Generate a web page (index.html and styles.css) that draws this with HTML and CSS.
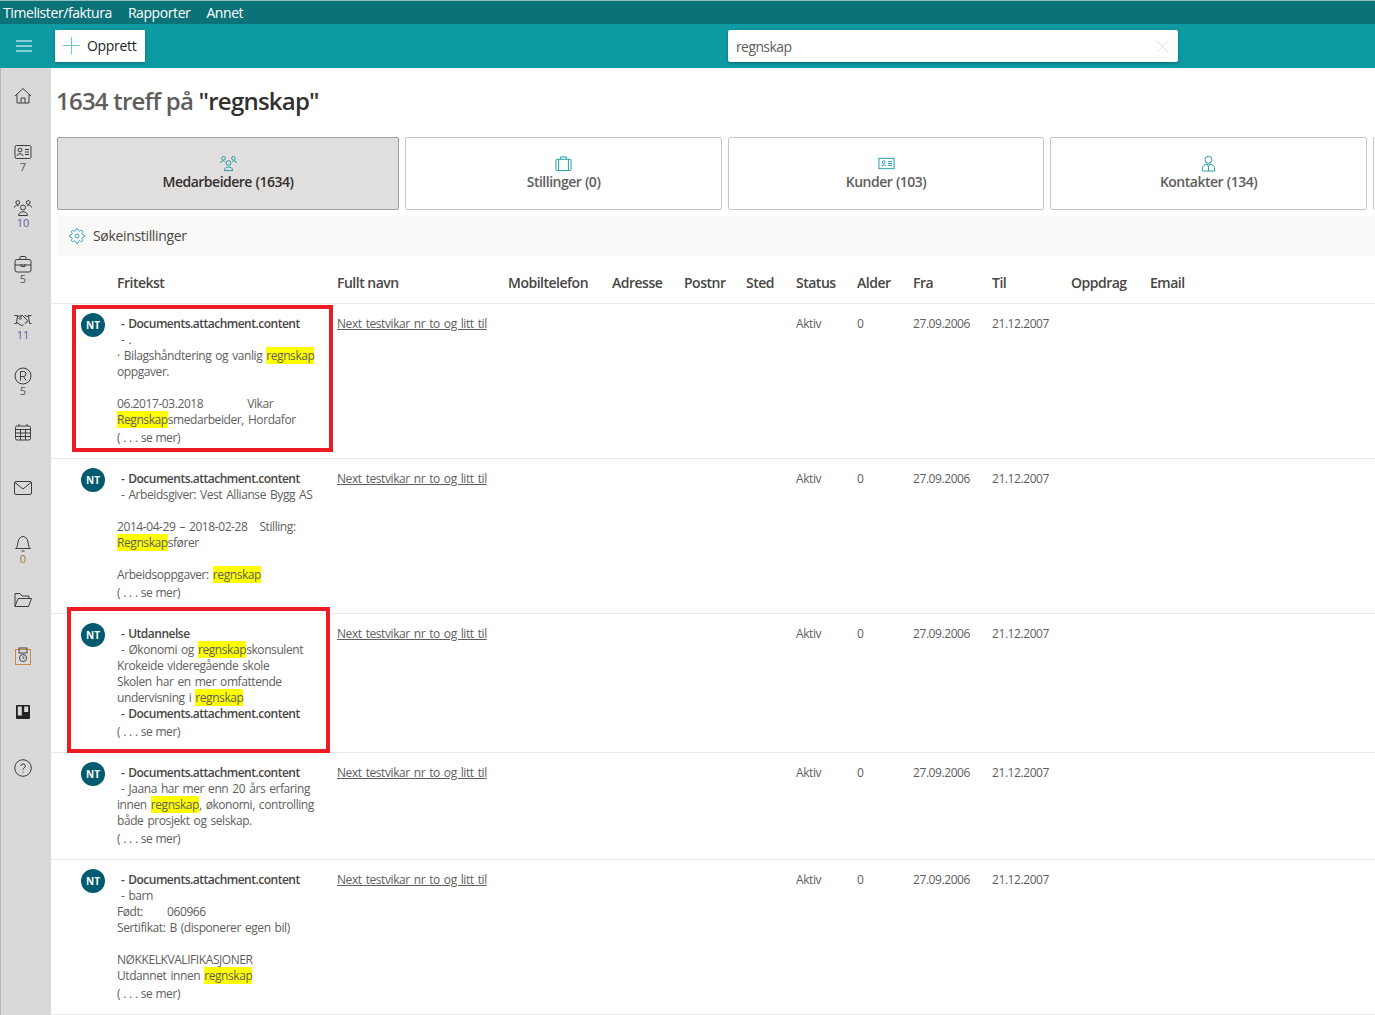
FILE: index.html

```html
<!DOCTYPE html>
<html lang="nb">
<head>
    <meta charset="UTF-8">
    <title>Søk</title>
    <link rel="stylesheet" href="styles.css">
</head>
<body>
    <div class="menubar">
        <a>Timelister/faktura</a>
        <a>Rapporter</a>
        <a>Annet</a>
    </div>
    <div class="toolbar">
        <svg class="burger" viewBox="0 0 16 12"><path d="M0 1h16M0 6h16M0 11h16"/></svg>
        <button class="create-btn">
            <svg viewBox="0 0 18 18"><path d="M9 0v18M0 9h18"/></svg>
            Opprett
        </button>
        <div class="search-box">
            <span>regnskap</span>
            <svg viewBox="0 0 14 14"><path d="M1 1l12 12M13 1L1 13"/></svg>
        </div>
    </div>

    <div class="layout">
        <nav class="sidebar">
            <div class="side-item">
                <svg viewBox="0 0 18 18"><path d="M1 9l8-7.500L17 9M3 7.500V16h12V7.500M7 16v-5h4v5"/></svg>
            </div>
            <div class="side-item">
                <svg viewBox="0 0 18 18"><rect x="1" y="2.500" width="16" height="13" rx="1.500"/><circle cx="6" cy="7" r="1.900"/><path d="M3 13c.3-3 5.700-3 6 0M11 6.500h4M11 9h4M11 11.500h4"/></svg>
                <span>7</span>
            </div>
            <div class="side-item">
                <svg viewBox="0 0 18 18"><circle cx="9" cy="8.500" r="2.500"/><circle cx="3.800" cy="3.500" r="1.900"/><circle cx="14.200" cy="3.500" r="1.900"/><path d="M4.500 16.500c0-5 9-5 9 0zM.5 8.500c.3-2.300 3-3 4.500-1.500M13 7c1.500-1.500 4.200-.8 4.500 1.500"/></svg>
                <span class="purple">10</span>
            </div>
            <div class="side-item">
                <svg viewBox="0 0 18 18"><rect x="1" y="4.500" width="16" height="12.500" rx="2"/><path d="M6 4.500V2.500a1 1 0 0 1 1-1h4a1 1 0 0 1 1 1v2M1 10h16M7 9v2.500h4V9"/></svg>
                <span>5</span>
            </div>
            <div class="side-item">
                <svg viewBox="0 0 18 18"><path d="M.5 4.500h3l-1 8h-2M17.500 4.500h-3l1 8h2M3.500 5.500c2 0 3-1 5-1l5 5c.8 1-.5 2-1.300 1.300M8 7c-1 1.500-2.500 1.500-3 .5l3-3M14.500 5.500c-1.500 0-2.500-.5-4-1M2.800 11.500l4.700 3c1 .5 2-.5 1.500-1.200M12 10.800c.5 1-.5 2-1.300 1.500"/></svg>
                <span class="purple">11</span>
            </div>
            <div class="side-item">
                <svg viewBox="0 0 18 18"><circle cx="9" cy="9" r="8"/><path d="M6.500 13.500v-9h3a2.500 2.500 0 0 1 0 5h-3M9.500 9.500l2.500 4"/></svg>
                <span>5</span>
            </div>
            <div class="side-item">
                <svg viewBox="0 0 18 18"><rect x="1.500" y="3" width="15" height="14" rx="1.500"/><path d="M1.500 6.500h15M1.500 10h15M1.500 13.500h15M6.500 6.500V17M11.500 6.500V17M5 1v2M13 1v2"/></svg>
            </div>
            <div class="side-item">
                <svg viewBox="0 0 18 18"><rect x=".5" y="2.500" width="17" height="13" rx="1.500"/><path d="M1 3.500l8 6.500 8-6.500"/></svg>
            </div>
            <div class="side-item">
                <svg viewBox="0 0 18 18"><path d="M1.500 13.500c2-1 2-3.500 2.500-6.500C4.500 4 6.500 1.500 9 1.500s4.500 2.500 5 5.500c.5 3 .5 5.500 2.500 6.500zM7.500 16h3"/></svg>
                <span class="orange">0</span>
            </div>
            <div class="side-item">
                <svg viewBox="0 0 18 18"><path d="M1 15.500V2.500h5l2 2.500h7v2.500M1 15.500l3-8h13.500l-3 8z"/></svg>
            </div>
            <div class="side-item">
                <svg class="orange-icon" viewBox="0 0 18 18"><rect x="1.500" y="2.500" width="15" height="15"/><rect class="dark" x="5" y="1" width="8" height="5"/><circle class="dark" cx="9" cy="11" r="3.500"/><path class="dark" d="M9 9.500V11h1.300"/></svg>
            </div>
            <div class="side-item">
                <svg viewBox="0 0 18 18"><path class="solid" d="M3 2h12a1 1 0 0 1 1 1v12a1 1 0 0 1-1 1H3a1 1 0 0 1-1-1V3a1 1 0 0 1 1-1zm.8 1.500v9h4v-9zm6.400 0v5.500h4V3.500z"/></svg>
            </div>
            <div class="side-item">
                <svg viewBox="0 0 18 18"><circle cx="9" cy="9" r="8.300"/><path d="M6.800 7a2.200 2.200 0 1 1 3.400 1.900C9.300 9.500 9 10 9 11M9 12.600v1"/></svg>
            </div>
        </nav>

        <main class="content">
            <h1><span class="muted">1634 treff på</span> "regnskap"</h1>

            <div class="tabs">
                <div class="tab active">
                    <svg viewBox="0 0 18 18"><circle cx="9" cy="8.500" r="2.500"/><circle cx="3.800" cy="3.500" r="1.900"/><circle cx="14.200" cy="3.500" r="1.900"/><path d="M4.500 16.500c0-5 9-5 9 0zM.5 8.500c.3-2.300 3-3 4.500-1.500M13 7c1.500-1.500 4.200-.8 4.500 1.500"/></svg>
                    Medarbeidere (1634)
                </div>
                <div class="tab">
                    <svg viewBox="0 0 18 18"><rect x="1" y="4.500" width="16" height="12" rx="1"/><path d="M6 4.500V2h6v2.500M3.800 4.500v12M14.200 4.500v12"/></svg>
                    Stillinger (0)
                </div>
                <div class="tab">
                    <svg viewBox="0 0 18 18"><rect x="1" y="3.500" width="16" height="11"/><circle cx="6" cy="7.500" r="1.500"/><path d="M3.500 12c.3-2 4.700-2 5 0M10.500 7h4.500M10.500 9h4.500M10.500 11h4.500"/></svg>
                    Kunder (103)
                </div>
                <div class="tab">
                    <svg viewBox="0 0 18 18"><circle cx="9" cy="5" r="3.700"/><path d="M2.500 17c-.5-6 3-7.500 6.500-7.500s7 1.500 6.500 7.500zM7.500 10L9 12.500l1.500-2.500M9 12.500V17"/></svg>
                    Kontakter (134)
                </div>
                <div class="tab"></div>
            </div>

            <div class="settings">
                <svg viewBox="0 0 24 24"><circle cx="12" cy="12" r="3"/><path d="M19.400 15a1.650 1.650 0 0 0 .33 1.820l.06.06a2 2 0 0 1 0 2.830 2 2 0 0 1-2.830 0l-.06-.06a1.650 1.650 0 0 0-1.820-.33 1.650 1.650 0 0 0-1 1.510V21a2 2 0 0 1-2 2 2 2 0 0 1-2-2v-.09A1.650 1.650 0 0 0 9 19.400a1.650 1.650 0 0 0-1.820.33l-.06.06a2 2 0 0 1-2.830 0 2 2 0 0 1 0-2.830l.06-.06a1.650 1.650 0 0 0 .33-1.820 1.650 1.650 0 0 0-1.510-1H3a2 2 0 0 1-2-2 2 2 0 0 1 2-2h.09A1.650 1.650 0 0 0 4.600 9a1.650 1.650 0 0 0-.33-1.820l-.06-.06a2 2 0 0 1 0-2.830 2 2 0 0 1 2.830 0l.06.06a1.650 1.650 0 0 0 1.820.33H9a1.650 1.650 0 0 0 1-1.510V3a2 2 0 0 1 2-2 2 2 0 0 1 2 2v.09a1.650 1.650 0 0 0 1 1.510 1.650 1.650 0 0 0 1.820-.33l.06-.06a2 2 0 0 1 2.830 0 2 2 0 0 1 0 2.830l-.06.06a1.650 1.650 0 0 0-.33 1.820V9a1.650 1.650 0 0 0 1.510 1H21a2 2 0 0 1 2 2 2 2 0 0 1-2 2h-.09a1.650 1.650 0 0 0-1.510 1z"/></svg>
                <span>Søkeinstillinger</span>
            </div>

            <div class="cols head">
                <div></div>
                <div>Fritekst</div>
                <div>Fullt navn</div>
                <div>Mobiltelefon</div>
                <div>Adresse</div>
                <div>Postnr</div>
                <div>Sted</div>
                <div>Status</div>
                <div>Alder</div>
                <div>Fra</div>
                <div>Til</div>
                <div>Oppdrag</div>
                <div>Email</div>
            </div>

            <div class="cols row">
                <div class="marked first"></div>
                <div class="avatar">NT</div>
                <div class="free">
                    <b>&nbsp;- Documents.attachment.content</b><br>
                    &nbsp;- .<br>
                    · Bilagshåndtering og vanlig <mark>regnskap</mark><br>
                    oppgaver.<br>
                    <br>
                    06.2017-03.2018 &nbsp; &nbsp; &nbsp; &nbsp; &nbsp; Vikar<br>
                    <mark>Regnskap</mark>smedarbeider, Hordafor
                    <div class="more">( . . . se mer)</div>
                </div>
                <div class="name">Next testvikar nr to og litt til</div>
                <div></div><div></div><div></div><div></div>
                <div>Aktiv</div><div>0</div><div>27.09.2006</div><div>21.12.2007</div><div></div><div></div>
            </div>

            <div class="cols row">
                <div class="avatar">NT</div>
                <div class="free">
                    <b>&nbsp;- Documents.attachment.content</b><br>
                    &nbsp;- Arbeidsgiver: Vest Allianse Bygg AS<br>
                    <br>
                    2014-04-29 – 2018-02-28 &nbsp; Stilling:<br>
                    <mark>Regnskap</mark>sfører<br>
                    <br>
                    Arbeidsoppgaver: <mark>regnskap</mark>
                    <div class="more">( . . . se mer)</div>
                </div>
                <div class="name">Next testvikar nr to og litt til</div>
                <div></div><div></div><div></div><div></div>
                <div>Aktiv</div><div>0</div><div>27.09.2006</div><div>21.12.2007</div><div></div><div></div>
            </div>

            <div class="cols row">
                <div class="marked second"></div>
                <div class="avatar">NT</div>
                <div class="free">
                    <b>&nbsp;- Utdannelse</b><br>
                    &nbsp;- Økonomi og <mark>regnskap</mark>skonsulent<br>
                    Krokeide videregående skole<br>
                    Skolen har en mer omfattende<br>
                    undervisning i <mark>regnskap</mark><br>
                    <b>&nbsp;- Documents.attachment.content</b>
                    <div class="more">( . . . se mer)</div>
                </div>
                <div class="name">Next testvikar nr to og litt til</div>
                <div></div><div></div><div></div><div></div>
                <div>Aktiv</div><div>0</div><div>27.09.2006</div><div>21.12.2007</div><div></div><div></div>
            </div>

            <div class="cols row">
                <div class="avatar">NT</div>
                <div class="free">
                    <b>&nbsp;- Documents.attachment.content</b><br>
                    &nbsp;- Jaana har mer enn 20 års erfaring<br>
                    innen <mark>regnskap</mark>, økonomi, controlling<br>
                    både prosjekt og selskap.
                    <div class="more">( . . . se mer)</div>
                </div>
                <div class="name">Next testvikar nr to og litt til</div>
                <div></div><div></div><div></div><div></div>
                <div>Aktiv</div><div>0</div><div>27.09.2006</div><div>21.12.2007</div><div></div><div></div>
            </div>

            <div class="cols row">
                <div class="avatar">NT</div>
                <div class="free">
                    <b>&nbsp;- Documents.attachment.content</b><br>
                    &nbsp;- barn<br>
                    Født: &nbsp; &nbsp; &nbsp;060966<br>
                    Sertifikat: B (disponerer egen bil)<br>
                    <br>
                    NØKKELKVALIFIKASJONER<br>
                    Utdannet innen <mark>regnskap</mark>
                    <div class="more">( . . . se mer)</div>
                </div>
                <div class="name">Next testvikar nr to og litt til</div>
                <div></div><div></div><div></div><div></div>
                <div>Aktiv</div><div>0</div><div>27.09.2006</div><div>21.12.2007</div><div></div><div></div>
            </div>
        </main>
    </div>
</body>
</html>
```

FILE: styles.css

```css
html, body {
    margin: 0;
    height: 100%;
    overflow: hidden;
}

body {
    font-family: "Open Sans", "Noto Sans", sans-serif;
    font-size: 12px;
    color: #605e5c;
    background: #fff;
}

svg {
    fill: none;
    stroke: currentColor;
    stroke-width: 1;
}

/* topp */
.menubar {
    height: 24px;
    box-sizing: border-box;
    background: #0b7278;
    border-top: 1px solid #8fbfc2;
    color: #fff;
    display: flex;
    gap: 16px;
    padding-left: 3px;
    font-size: 14px;
    letter-spacing: -0.42px;
    line-height: 23px;
}

.toolbar {
    height: 44px;
    background: #0e9aa3;
    display: flex;
    align-items: center;
    position: relative;
}

.burger {
    width: 16px;
    height: 12px;
    margin-left: 16px;
    margin-right: 23px;
    color: #fff;
}

.create-btn {
    width: 90px;
    height: 32px;
    background: #fff;
    border: none;
    padding: 0 0 2px 8px;
    display: flex;
    align-items: center;
    gap: 7px;
    font: 500 14px "Open Sans", sans-serif;
    letter-spacing: -0.3px;
    color: #201f1e;
    box-shadow: 0 1px 3px rgba(0,0,0,0.3);
}

.create-btn svg {
    width: 17px;
    height: 17px;
    color: #74c8cd;
    stroke-width: 1.2;
}

.search-box {
    width: 450px;
    height: 32px;
    margin-left: 583px;
    background: #fff;
    border-radius: 2px;
    box-shadow: 0 1px 3px rgba(0,0,0,0.35);
    display: flex;
    align-items: center;
    justify-content: space-between;
    padding: 0 9px 0 8px;
    box-sizing: border-box;
    font-size: 14px;
    letter-spacing: -0.6px;
    color: #605e5c;
}

.search-box svg {
    width: 13px;
    height: 13px;
    color: #e0e0e0;
}

/* sidemeny */
.layout {
    display: flex;
    height: 947px;
}

.sidebar {
    width: 51px;
    flex: none;
    box-sizing: border-box;
    background: #d9d9d9;
    border-left: 1px solid #b5b5b5;
    padding-right: 6px;
}

.side-item {
    height: 56px;
    box-sizing: border-box;
    padding-top: 19px;
    display: flex;
    flex-direction: column;
    align-items: center;
    color: #3d3d3d;
}

.side-item svg {
    width: 18px;
    height: 18px;
    flex: none;
}

.side-item span {
    font-size: 11px;
    line-height: 12px;
    color: #555;
}

.side-item .purple {
    color: #6b5a9a;
}

.side-item .orange {
    color: #9a7a3a;
}

.orange-icon {
    color: #c98a3c;
}

.orange-icon .dark {
    stroke: #444;
}

.solid {
    fill: #222;
    stroke: none;
}

/* innhold */
.content {
    flex: 1;
    min-width: 0;
}

h1 {
    margin: 0;
    padding: 16px 0 0 5px;
    height: 69px;
    box-sizing: border-box;
    font-size: 24px;
    line-height: 33px;
    font-weight: 600;
    letter-spacing: -0.78px;
    color: #323130;
}

.muted {
    color: #605e5c;
}

.tabs {
    display: grid;
    grid-template-columns: 342px 317px 316px 317px 317px;
    gap: 6px;
    margin-left: 6px;
    overflow: hidden;
}

.tab {
    height: 73px;
    box-sizing: border-box;
    border: 1px solid #c8c6c4;
    border-radius: 2px;
    display: flex;
    flex-direction: column;
    align-items: center;
    padding-top: 17px;
    font-size: 14px;
    font-weight: 600;
    letter-spacing: -0.5px;
    word-spacing: 0.5px;
    line-height: 19px;
    color: #605e5c;
}

.tab svg {
    width: 17px;
    height: 17px;
    flex: none;
    color: #1b9aa3;
}

.tab.active {
    background: #e1dfdd;
    border-color: #a19f9d;
    color: #323130;
}

.settings {
    height: 40px;
    margin: 6px 0 0 6px;
    background: #faf9f8;
    display: flex;
    align-items: center;
    gap: 8px;
    padding-left: 12px;
    font-size: 14px;
    letter-spacing: -0.33px;
    color: #484644;
}

.settings span {
    margin-bottom: 2px;
}

.settings svg {
    width: 16px;
    height: 16px;
    color: #1b9aa3;
    stroke-width: 1.3;
}

/* tabell */
.cols {
    display: grid;
    grid-template-columns: 66px 220px 171px 104px 72px 62px 50px 61px 56px 79px 79px 79px 1fr;
}

.head {
    height: 48px;
    box-sizing: border-box;
    border-bottom: 1px solid #edebe9;
    align-items: center;
    padding-top: 5px;
    font-size: 14px;
    font-weight: 600;
    letter-spacing: -0.5px;
    color: #484644;
}

.row {
    position: relative;
    box-sizing: border-box;
    padding: 12px 0;
    border-bottom: 1px solid #edebe9;
    line-height: 16px;
    letter-spacing: -0.42px;
    word-spacing: 1.3px;
}

.avatar {
    width: 24px;
    height: 24px;
    margin: -3px 0 0 30px;
    border-radius: 50%;
    background: #005b70;
    color: #fff;
    font-size: 10px;
    font-weight: 700;
    letter-spacing: 0;
    line-height: 24px;
    text-align: center;
}

.free {
    white-space: nowrap;
}

.free b {
    font-weight: 600;
    color: #484644;
    letter-spacing: -0.5px;
}

mark {
    background: #ff0;
    color: inherit;
}

.more {
    margin-top: 2px;
    word-spacing: 0.4px;
}

.name {
    text-decoration: underline;
    white-space: nowrap;
}

.marked {
    position: absolute;
    box-sizing: border-box;
    border: 4px solid #ed1c24;
    pointer-events: none;
}

.marked.first {
    left: 21px;
    top: 1px;
    width: 261px;
    height: 147px;
}

.marked.second {
    left: 16px;
    top: -7px;
    width: 263px;
    height: 146px;
}
```
